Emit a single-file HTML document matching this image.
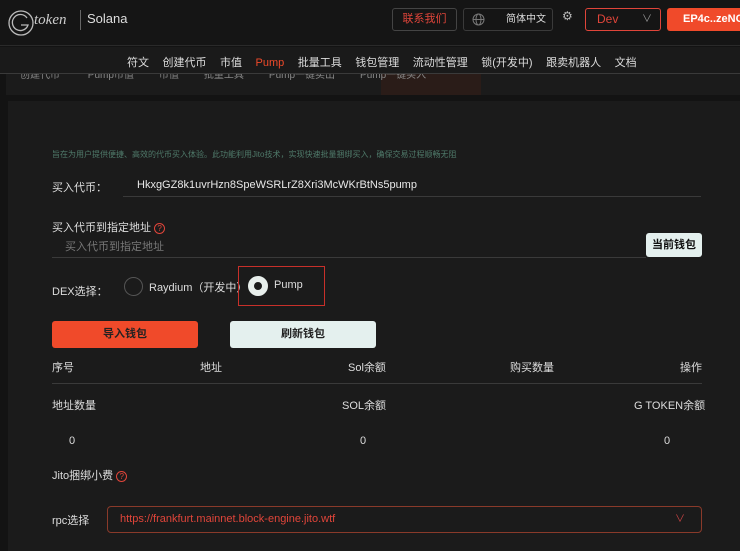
<!DOCTYPE html><html><head><meta charset="utf-8"><style>
*{margin:0;padding:0;box-sizing:border-box}
body{width:740px;height:551px;overflow:hidden;background:#131313;font-family:"Liberation Sans","Noto Sans CJK SC",sans-serif;color:#ddd;font-size:11px;position:relative}
.a{position:absolute}
.nv span{margin-right:13.5px}
</style></head><body>
<div class="a" style="left:0;top:0;width:740px;height:46px;background:#151515;border-bottom:1px solid #2a2a2a"></div>
<svg class="a" style="left:6px;top:8px" width="30" height="30"><circle cx="15" cy="15" r="12" fill="none" stroke="#bbb" stroke-width="1.3"/><path d="M21 10 A8 8 0 1 0 22 17 H15" fill="none" stroke="#bbb" stroke-width="1.3"/></svg>
<div class="a" style="left:34px;top:12px;font-family:'Liberation Serif',serif;font-style:italic;font-size:15px;color:#ccc">token</div>
<div class="a" style="left:80px;top:10px;width:1px;height:20px;background:#666"></div>
<div class="a" style="left:87px;top:11px;font-size:13px;color:#ddd">Solana</div>
<div class="a" style="left:392px;top:8px;width:65px;height:23px;border:1px solid #444;border-radius:3px;color:#e0453a;font-size:11px;text-align:center;line-height:21px">联系我们</div>
<div class="a" style="left:463px;top:8px;width:90px;height:23px;border:1px solid #3a3a3a;border-radius:3px;font-size:10px;line-height:21px;padding-left:42px">简体中文</div>
<svg class="a" style="left:472px;top:13px" width="13" height="13"><circle cx="6.5" cy="6.5" r="5.5" fill="none" stroke="#777"/><ellipse cx="6.5" cy="6.5" rx="2.5" ry="5.5" fill="none" stroke="#777"/><path d="M1 6.5H12" stroke="#777"/></svg>
<div class="a" style="left:562px;top:9px;font-size:12px;color:#bbb">⚙</div>
<div class="a" style="left:585px;top:8px;width:76px;height:23px;border:1px solid #e0453a;border-radius:3px;color:#e0453a;font-size:12px;line-height:21px;padding-left:11px">Dev<span style="position:absolute;right:8px;color:#999;font-size:10px">∨</span></div>
<div class="a" style="left:667px;top:8px;width:80px;height:23px;background:#f04a2a;border-radius:3px;color:#fff;font-weight:bold;font-size:11px;line-height:23px;padding-left:16px">EP4c..zeNG</div>
<div class="a" style="left:6px;top:74px;width:734px;height:21px;background:#1b1b1b"></div>
<div class="a" style="left:381px;top:74px;width:100px;height:21px;background:#2a1c18"></div>
<div class="a" style="left:20px;top:66px;font-size:10px;color:#888;white-space:nowrap">创建代币&nbsp;&nbsp;&nbsp;&nbsp;&nbsp;&nbsp;&nbsp;&nbsp;&nbsp;&nbsp;Pump市值&nbsp;&nbsp;&nbsp;&nbsp;&nbsp;&nbsp;&nbsp;&nbsp;&nbsp;市值&nbsp;&nbsp;&nbsp;&nbsp;&nbsp;&nbsp;&nbsp;&nbsp;&nbsp;批量工具&nbsp;&nbsp;&nbsp;&nbsp;&nbsp;&nbsp;&nbsp;&nbsp;&nbsp;Pump一键卖出&nbsp;&nbsp;&nbsp;&nbsp;&nbsp;&nbsp;&nbsp;&nbsp;&nbsp;Pump一键买入</div>
<div class="a" style="left:0;top:47px;width:740px;height:27px;background:#1a1a1a;border-bottom:1px solid #3a3a3a"></div>
<div class="a nv" style="left:127px;top:54px;font-size:11px;color:#ddd;white-space:nowrap"><span>符文</span><span>创建代币</span><span>市值</span><span style="color:#f04a2a">Pump</span><span>批量工具</span><span>钱包管理</span><span>流动性管理</span><span>锁(开发中)</span><span>跟卖机器人</span><span>文档</span></div>
<div class="a" style="left:8px;top:101px;width:732px;height:450px;background:#1b1b1b"></div>
<div class="a" style="left:52px;top:149px;font-size:8px;color:#4f7a6a">旨在为用户提供便捷、高效的代币买入体验。此功能利用Jito技术，实现快速批量捆绑买入，确保交易过程顺畅无阻</div>
<div class="a" style="left:52px;top:179px;font-size:11px">买入代币：</div>
<div class="a" style="left:137px;top:179px;font-size:11px;color:#e8e8e8">HkxgGZ8k1uvrHzn8SpeWSRLrZ8Xri3McWKrBtNs5pump</div>
<div class="a" style="left:123px;top:196px;width:578px;height:1px;background:#3a3a3a"></div>
<div class="a" style="left:52px;top:219px;font-size:11px">买入代币到指定地址 <span style="display:inline-block;width:11px;height:11px;border:1px solid #e0453a;border-radius:50%;color:#e0453a;font-size:8px;text-align:center;line-height:9px">?</span></div>
<div class="a" style="left:65px;top:238px;font-size:11px;color:#777">买入代币到指定地址</div>
<div class="a" style="left:52px;top:257px;width:594px;height:1px;background:#3a3a3a"></div>
<div class="a" style="left:646px;top:233px;width:56px;height:24px;background:#e4f0ee;border-radius:3px;color:#111;font-weight:bold;font-size:11px;text-align:center;line-height:24px">当前钱包</div>
<div class="a" style="left:52px;top:283px;font-size:11px">DEX选择：</div>
<div class="a" style="left:124px;top:277px;width:19px;height:19px;border:1px solid #555;border-radius:50%"></div>
<div class="a" style="left:149px;top:279px;font-size:11px">Raydium（开发中）</div>
<div class="a" style="left:238px;top:266px;width:87px;height:40px;border:1px solid #c8302a"></div>
<div class="a" style="left:248px;top:276px;width:20px;height:20px;border:6px solid #e8efec;border-radius:50%;background:#1b1b1b"></div>
<div class="a" style="left:274px;top:279px;font-size:11px">Pump</div>
<div class="a" style="left:52px;top:321px;width:146px;height:27px;background:#f04a2a;border-radius:3px;color:#222;font-weight:bold;font-size:11px;text-align:center;line-height:27px">导入钱包</div>
<div class="a" style="left:230px;top:321px;width:146px;height:27px;background:#e4f0ee;border-radius:3px;color:#222;font-weight:bold;font-size:11px;text-align:center;line-height:27px">刷新钱包</div>
<div class="a" style="left:52px;top:359px;font-size:11px">序号</div>
<div class="a" style="left:200px;top:359px;font-size:11px">地址</div>
<div class="a" style="left:348px;top:359px;font-size:11px">Sol余额</div>
<div class="a" style="left:510px;top:359px;font-size:11px">购买数量</div>
<div class="a" style="left:680px;top:359px;font-size:11px">操作</div>
<div class="a" style="left:52px;top:383px;width:650px;height:1px;background:#3a3a3a"></div>
<div class="a" style="left:52px;top:397px;font-size:11px">地址数量</div>
<div class="a" style="left:342px;top:397px;font-size:11px">SOL余额</div>
<div class="a" style="left:634px;top:397px;font-size:11px">G TOKEN余额</div>
<div class="a" style="left:69px;top:435px;font-size:11px">0</div>
<div class="a" style="left:360px;top:435px;font-size:11px">0</div>
<div class="a" style="left:664px;top:435px;font-size:11px">0</div>
<div class="a" style="left:52px;top:467px;font-size:11px">Jito捆绑小费 <span style="display:inline-block;width:11px;height:11px;border:1px solid #e0453a;border-radius:50%;color:#e0453a;font-size:8px;text-align:center;line-height:9px">?</span></div>
<div class="a" style="left:52px;top:512px;font-size:11px">rpc选择</div>
<div class="a" style="left:107px;top:506px;width:595px;height:27px;border:1px solid #8a3a2a;border-radius:4px;color:#e0453a;font-size:11px;line-height:25px;padding-left:12px">https://frankfurt.mainnet.block-engine.jito.wtf<span style="position:absolute;right:16px;color:#c44;font-size:10px">∨</span></div>
</body></html>
